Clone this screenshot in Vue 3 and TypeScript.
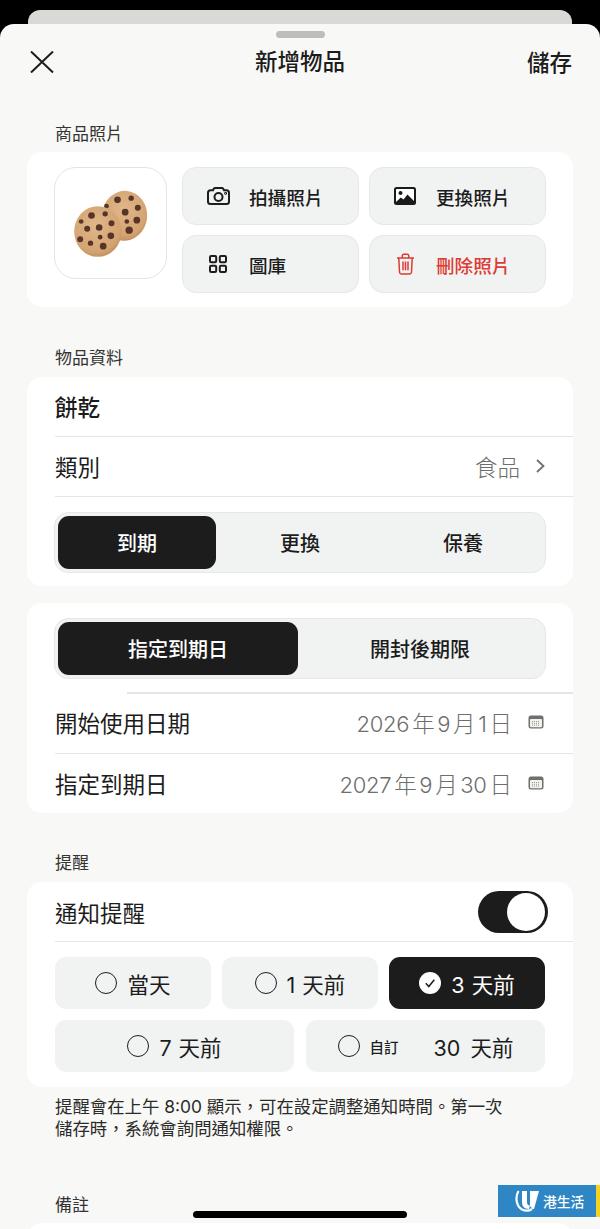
<script setup lang="ts">
const photoActions = [
  { key: 'camera', label: '拍攝照片' },
  { key: 'picture', label: '更換照片' },
  { key: 'grid', label: '圖庫' },
  { key: 'trash', label: '刪除照片', danger: true },
]
const kinds = ['到期', '更換', '保養']
// Chocolate chips as [x, y, radius] on the two biscuits
const backChips = [
  [201, 118, 10], [242, 113, 8], [168, 137, 7], [262, 142, 9], [224, 155, 10], [229, 183, 7], [259, 179, 10], [236, 209, 11],
]
const frontChips = [
  [123, 165, 10], [164, 160, 8], [92, 183, 7], [183, 188, 9], [110, 205, 9], [146, 201, 10], [181, 226, 10], [149, 230, 7], [89, 236, 9], [120, 248, 8], [158, 257, 10],
]
</script>

<template>
  <div class="screen">
    <div class="peek"></div>
    <main class="sheet">
      <div class="grabber"></div>
      <header class="nav">
        <svg class="close" viewBox="0 0 24 22" width="24" height="22" aria-label="關閉">
          <path d="M1 0.500 23 21.500M23 0.500 1 21.500" />
        </svg>
        <h1>新增物品</h1>
        <button class="save" type="button">儲存</button>
      </header>

      <h2 class="label first">商品照片</h2>
      <section class="card photo-card">
        <div class="thumb">
          <svg viewBox="16.500 22.500 330 330" width="110" height="110">
            <defs>
              <radialGradient id="dough" cx="45%" cy="38%" r="70%">
                <stop offset="0" stop-color="#e0b78a" />
                <stop offset="0.75" stop-color="#d4a372" />
                <stop offset="1" stop-color="#b98657" />
              </radialGradient>
            </defs>
            <ellipse cx="222" cy="166" rx="68" ry="75" fill="url(#dough)" transform="rotate(6 222 166)" />
            <circle v-for="(c, i) in backChips" :key="'b' + i" :cx="c[0]" :cy="c[1]" :r="c[2]" fill="#573629" />
            <ellipse cx="142" cy="213" rx="71" ry="76" fill="url(#dough)" />
            <circle v-for="(c, i) in frontChips" :key="'f' + i" :cx="c[0]" :cy="c[1]" :r="c[2]" fill="#573629" />
          </svg>
        </div>
        <div class="photo-grid">
          <button v-for="a in photoActions" :key="a.key" class="photo-btn" :class="{ danger: a.danger }" type="button">
            <span class="icon-slot">
              <svg v-if="a.key === 'camera'" viewBox="0 0 23 18" width="23" height="18" class="ico">
                <path d="M6 3.300 6.800 1.800A1.500 1.500 0 0 1 8.100 1h6.800a1.500 1.500 0 0 1 1.300.8l.8 1.500H19.500A2.500 2.500 0 0 1 22 5.800v8.700A2.500 2.500 0 0 1 19.500 17H3.500A2.500 2.500 0 0 1 1 14.500V5.800A2.500 2.500 0 0 1 3.500 3.300Z" />
                <circle cx="11.500" cy="10" r="4" />
                <circle cx="18.600" cy="6.300" r="0.500" />
              </svg>
              <svg v-else-if="a.key === 'picture'" viewBox="0 0 22 18" width="22" height="18">
                <rect width="22" height="18" rx="2.500" fill="#1a1a1a" />
                <rect x="2" y="2" width="18" height="13" rx="0.800" fill="#fff" />
                <circle cx="6.500" cy="6" r="2" fill="#1a1a1a" />
                <path d="M2 15 6.800 10.500l2.700 2L13.500 7.500 20 14v2H2Z" fill="#1a1a1a" />
              </svg>
              <svg v-else-if="a.key === 'grid'" viewBox="0 0 18 18" width="18" height="18" class="ico">
                <rect x="1" y="1" width="6.200" height="6.200" rx="1.200" />
                <rect x="10.800" y="1" width="6.200" height="6.200" rx="1.200" />
                <rect x="1" y="10.800" width="6.200" height="6.200" rx="1.200" />
                <rect x="10.800" y="10.800" width="6.200" height="6.200" rx="1.200" />
              </svg>
              <svg v-else viewBox="0 0 19 22" width="19" height="22" class="ico trash">
                <path d="M1 5h17M6.300 5V2.800A1.500 1.500 0 0 1 7.800 1.300h3.400a1.500 1.500 0 0 1 1.500 1.500V5M2.800 5l.7 14.200a2 2 0 0 0 2 1.800h8a2 2 0 0 0 2-1.800L16.200 5M7 8.500v8.700M9.500 8.500v8.700M12 8.500v8.700" />
              </svg>
            </span>
            <span>{{ a.label }}</span>
          </button>
        </div>
      </section>

      <h2 class="label">物品資料</h2>
      <section class="card details">
        <div class="row name-row"><strong>餅乾</strong></div>
        <div class="row">
          <span>類別</span>
          <span class="value">食品
            <svg class="chev" viewBox="0 0 9 14" width="9" height="14"><path d="M1 1l6.500 6L1 13" /></svg>
          </span>
        </div>
        <div class="seg-wrap">
          <div class="seg three">
            <div v-for="(k, i) in kinds" :key="k" class="seg-item" :class="{ on: i === 0 }">{{ k }}</div>
          </div>
        </div>
      </section>

      <section class="card dates">
        <div class="seg-wrap top">
          <div class="seg two">
            <div class="seg-item on">指定到期日</div>
            <div class="seg-item">開封後期限</div>
          </div>
        </div>
        <div class="rule inset-wide"></div>
        <div class="row date-row">
          <span>開始使用日期</span>
          <span class="value">
            <span class="date"><i>2026</i>年<i>9</i>月<i>1</i>日</span>
            <svg class="cal" viewBox="0 0 16 14" width="16" height="14">
              <rect x="0.500" y="0.500" width="15" height="13" rx="2.500" fill="#6f6f6b" />
              <rect x="2" y="4" width="12" height="8.300" rx="1" fill="#f2f2f0" />
              <path d="M4 6.500h8M4 8.300h8M4 10.100h8" stroke="#8b8b87" stroke-width="0.900" stroke-dasharray="1 1" />
            </svg>
          </span>
        </div>
        <div class="row date-row last">
          <span>指定到期日</span>
          <span class="value">
            <span class="date"><i>2027</i>年<i>9</i>月<i>30</i>日</span>
            <svg class="cal" viewBox="0 0 16 14" width="16" height="14">
              <rect x="0.500" y="0.500" width="15" height="13" rx="2.500" fill="#6f6f6b" />
              <rect x="2" y="4" width="12" height="8.300" rx="1" fill="#f2f2f0" />
              <path d="M4 6.500h8M4 8.300h8M4 10.100h8" stroke="#8b8b87" stroke-width="0.900" stroke-dasharray="1 1" />
            </svg>
          </span>
        </div>
      </section>

      <h2 class="label">提醒</h2>
      <section class="card remind">
        <div class="row switch-row">
          <span>通知提醒</span>
          <div class="switch"><div class="knob"></div></div>
        </div>
        <div class="chips">
          <div class="chips-line">
            <div class="chip"><span class="radio"></span><span>當天</span></div>
            <div class="chip"><span class="radio"></span><span><i class="num">1</i>天前</span></div>
            <div class="chip on">
              <svg viewBox="0 0 22 22" width="22" height="22" class="tick">
                <circle cx="11" cy="11" r="11" fill="#fff" />
                <path d="M6.800 11.300 9.800 14.500 15.300 7.800" fill="none" stroke="#1c1c1c" stroke-width="1.500" />
              </svg>
              <span><i class="num">3</i>天前</span>
            </div>
          </div>
          <div class="chips-line loose">
            <div class="chip"><span class="radio"></span><span><i class="num">7</i>天前</span></div>
            <div class="chip custom">
              <span class="radio"></span>
              <b>自訂</b>
              <span class="far"><i class="num">30</i>天前</span>
            </div>
          </div>
        </div>
      </section>

      <p class="hint">提醒會在上午 8:00 顯示，可在設定調整通知時間。第一次<br />儲存時，系統會詢問通知權限。</p>

      <h2 class="label notes">備註</h2>
      <section class="card notes-card"></section>
    </main>

    <div class="home"></div>
    <div class="badge">
      <svg viewBox="0 0 24 22" width="24" height="22">
        <path d="M3.500 1C0 7 1 16 7 19.500c3 1.500 7 1.500 10-.5" fill="none" stroke="#fff" stroke-width="2.200" />
        <path d="M7 1h5v11c0 2.500 1 3.500 3 3.500l-1 3.500c-5 0-7-3-7-7Z" fill="#fff" />
        <path d="M15 1h9l-5 18h-1.500l-2.500-3Z" fill="#fff" />
      </svg>
      <span>港生活</span>
      <em></em>
    </div>
  </div>
</template>

<style>
html,
body {
  margin: 0;
  background: #000;
}
</style>

<style scoped>
.screen {
  position: relative;
  width: 600px;
  height: 1229px;
  overflow: hidden;
  background: #000;
  font-family: "Inter", "Noto Sans CJK TC", "Noto Sans", sans-serif;
  color: #1c1c1c;
  padding-top: 10px;
  box-sizing: border-box;
}
.peek {
  height: 30px;
  margin: 0 28px -16px;
  border-radius: 12px 12px 0 0;
  background: #d9dad6;
}
.sheet {
  position: relative;
  height: 1300px;
  background: #f8f8f7;
  border-radius: 14px 14px 0 0;
  padding: 0 27px;
  box-sizing: border-box;
}
.grabber {
  position: absolute;
  top: 7px;
  left: 50%;
  width: 49px;
  height: 7px;
  margin-left: -24px;
  border-radius: 4px;
  background: #bdbdbb;
}
.nav {
  display: flex;
  align-items: center;
  justify-content: space-between;
  height: 76px;
  padding-left: 3px;
  margin-bottom: 23px;
  position: relative;
}
.nav h1 {
  position: absolute;
  left: 0;
  right: 0;
  top: 19px;
  margin: 0;
  text-align: center;
  font-size: 22.500px;
  line-height: 38px;
  font-weight: 500;
}
.close {
  fill: none;
  stroke: #1c1c1c;
  stroke-width: 2;
}
.save {
  border: 0;
  padding: 0;
  margin: 2px 1px 0 0;
  background: none;
  font: inherit;
  font-size: 22.500px;
  line-height: 38px;
  font-weight: 500;
  color: #1c1c1c;
}
.label {
  margin: 0 0 8px 28px;
  font-size: 17px;
  line-height: 22px;
  font-weight: 400;
  color: #333331;
}
.label.first {
  margin-bottom: 7px;
}
.card {
  background: #fff;
  border-radius: 15px;
}
.photo-card {
  display: flex;
  gap: 15px;
  padding: 15px 27px;
  height: 155px;
  box-sizing: border-box;
  margin-bottom: 40px;
}
.thumb {
  width: 113px;
  height: 112px;
  box-sizing: border-box;
  border: 1.500px solid #e4e5e3;
  border-radius: 22px;
  display: flex;
  align-items: center;
  justify-content: center;
  flex: none;
}
.photo-grid {
  display: grid;
  grid-template-columns: 177px 177px;
  grid-auto-rows: 58px;
  column-gap: 10px;
  row-gap: 10px;
}
.photo-btn {
  display: flex;
  align-items: center;
  padding: 0;
  font: inherit;
  font-size: 18.600px;
  color: #1c1c1c;
  background: #f1f3f2;
  border: 1.500px solid #e6e8e6;
  border-radius: 14px;
  box-sizing: border-box;
  font-weight: 500;
}
.icon-slot {
  width: 66px;
  box-sizing: border-box;
  padding-left: 4px;
  display: flex;
  justify-content: center;
  flex: none;
}
.danger {
  color: #dd3b34;
}
.ico {
  fill: none;
  stroke: #1c1c1c;
  stroke-width: 2;
}
.ico.trash {
  stroke: #dd3b34;
  stroke-width: 1.500;
}
.row {
  display: flex;
  align-items: center;
  justify-content: space-between;
  margin-left: 28px;
  font-size: 22.500px;
  border-bottom: 1.500px solid #e6e7e5;
  box-sizing: border-box;
  height: 60px;
  padding-right: 28px;
  padding-bottom: 2px;
}
.details {
  height: 209px;
  margin-bottom: 17px;
}
.name-row strong {
  font-weight: 500;
}
.value {
  display: flex;
  align-items: center;
  color: #6e6e6b;
  font-weight: 300;
}
.chev {
  margin-left: 16px;
  fill: none;
  stroke: #6f6f6b;
  stroke-width: 1.800;
}
.seg-wrap {
  padding: 15px 27px 0;
}
.seg-wrap.top {
  padding-bottom: 13px;
}
.seg {
  display: grid;
  background: #f1f3f2;
  border: 1.500px solid #e6e8e6;
  border-radius: 14px;
  box-sizing: border-box;
  padding: 3px;
  height: 61px;
}
.seg.three {
  grid-template-columns: 158px 168px 1fr;
}
.seg.two {
  grid-template-columns: 240px 1fr;
}
.seg-item {
  display: flex;
  align-items: center;
  justify-content: center;
  font-size: 20px;
  font-weight: 500;
  border-radius: 11px;
}
.seg-item.on {
  background: #1c1c1c;
  color: #fff;
}
.dates {
  height: 210px;
  margin-bottom: 39px;
}
.rule {
  height: 1.500px;
  background: #e6e7e5;
}
.inset-wide {
  margin-left: 100px;
}
.date-row {
  padding-right: 29px;
}
.date-row.last {
  border-bottom: 0;
}
.date {
  display: flex;
  align-items: baseline;
}
.date i {
  font-style: normal;
  font-size: 22px;
  letter-spacing: -0.300px;
  margin: 0 3px 0 2.500px;
}
.date i:first-child {
  margin-left: 0;
}
.cal {
  margin-left: 16px;
}
.remind {
  height: 205px;
}
.switch-row {
  padding-right: 25px;
  padding-bottom: 0;
}
.switch {
  width: 70px;
  height: 42px;
  border-radius: 21px;
  background: #1c1c1c;
  position: relative;
}
.knob {
  position: absolute;
  right: 3px;
  top: 2px;
  width: 38px;
  height: 38px;
  border-radius: 50%;
  background: #fff;
}
.chips {
  padding: 15px 28px 0;
  display: flex;
  flex-direction: column;
  gap: 11px;
}
.chips-line {
  display: flex;
  gap: 11px;
}
.chips-line.loose {
  gap: 12px;
}
.chip {
  flex: 1;
  height: 52px;
  border-radius: 11px;
  background: #f1f3f2;
  display: flex;
  align-items: center;
  justify-content: center;
  gap: 10px;
  font-size: 21.500px;
}
.chip.on {
  background: #1c1c1c;
  color: #fff;
}
.num {
  font-style: normal;
  margin-right: 7px;
}
.radio {
  width: 22px;
  height: 22px;
  box-sizing: border-box;
  border-radius: 50%;
  border: 1.800px solid #1c1c1c;
  flex: none;
}
.custom b {
  font-size: 14.500px;
  font-weight: 500;
}
.far {
  margin-left: 25px;
}
.far .num {
  margin-right: 10px;
}
.hint {
  margin: 9px 0 0 28px;
  font-size: 17.400px;
  line-height: 21.500px;
  color: #2b2b29;
}
.label.notes {
  margin-top: 55px;
  margin-bottom: 7px;
}
.notes-card {
  height: 60px;
}
.home {
  position: absolute;
  left: 193px;
  bottom: 11px;
  width: 214px;
  height: 7px;
  border-radius: 4px;
  background: #000;
}
.badge {
  position: absolute;
  left: 498px;
  top: 1185px;
  width: 102px;
  height: 32px;
  background: #2f86c5;
  display: flex;
  align-items: center;
  padding-left: 17px;
  box-sizing: border-box;
  color: #fff;
  font-size: 13.800px;
  font-weight: 500;
  gap: 4px;
}
.badge em {
  position: absolute;
  right: 0;
  top: 0;
  width: 4px;
  height: 32px;
  background: #f4d21f;
}
</style>
